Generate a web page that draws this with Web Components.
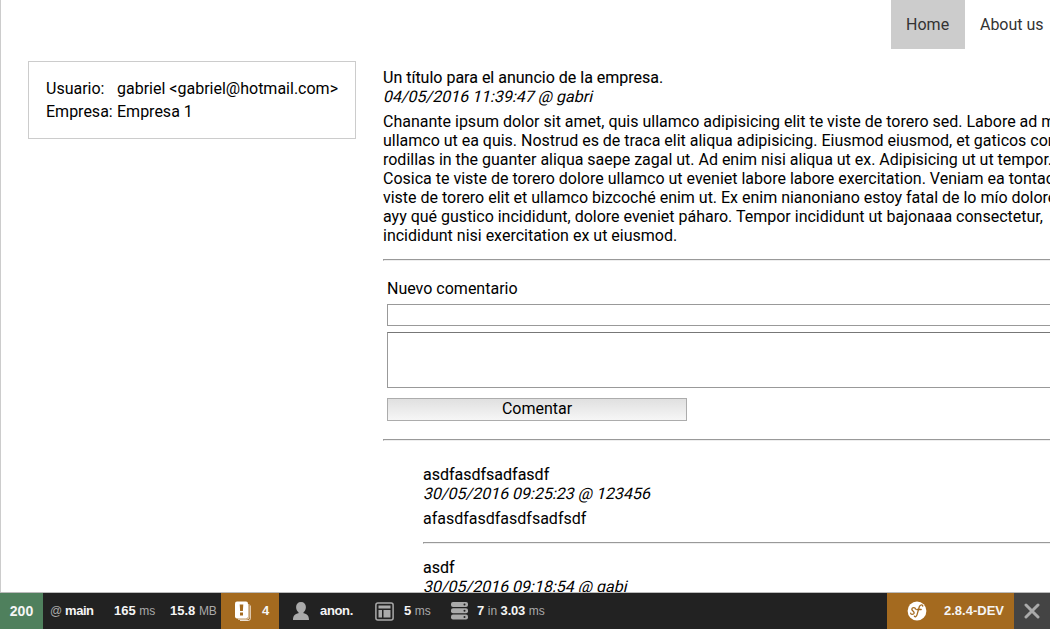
<!DOCTYPE html>
<html lang="es">
<head>
<meta charset="utf-8">
<title>Anuncio</title>
<style>
html,body{margin:0;height:100%;overflow:hidden;background:#fff}
body{font:16px/19px Roboto,sans-serif;color:#000}
</style>
</head>
<body>
<app-page>
  <site-nav slot="nav"><nav-link active>Home</nav-link><nav-link>About us</nav-link></site-nav>
  <user-card slot="side"></user-card>
  <news-post heading="Un título para el anuncio de la empresa." meta="04/05/2016 11:39:47 @ gabri">
    <text-line>Chanante ipsum dolor sit amet, quis ullamco adipisicing elit te viste de torero sed. Labore ad m</text-line>
    <text-line tight>ullamco ut ea quis. Nostrud es de traca elit aliqua adipisicing. Eiusmod eiusmod, et gaticos con</text-line>
    <text-line tight>rodillas in the guanter aliqua saepe zagal ut. Ad enim nisi aliqua ut ex. Adipisicing ut ut tempor.</text-line>
    <text-line>Cosica te viste de torero dolore ullamco ut eveniet labore labore exercitation. Veniam ea tontac</text-line>
    <text-line tight>viste de torero elit et ullamco bizcoché enim ut. Ex enim nianoniano estoy fatal de lo mío dolore</text-line>
    <text-line>ayy qué gustico incididunt, dolore eveniet páharo. Tempor incididunt ut bajonaaa consectetur,</text-line>
    <text-line>incididunt nisi exercitation ex ut eiusmod.</text-line>
  </news-post>
  <rule-line></rule-line>
  <comment-form></comment-form>
  <rule-line></rule-line>
  <comment-list>
    <news-post heading="asdfasdfsadfasdf" meta="30/05/2016 09:25:23 @ 123456"><text-line>afasdfasdfasdfsadfsdf</text-line></news-post>
    <rule-line></rule-line>
    <news-post heading="asdf" meta="30/05/2016 09:18:54 @ gabi"></news-post>
  </comment-list>
  <debug-toolbar slot="toolbar"></debug-toolbar>
</app-page>
<script>
const define = (name, html, setup) => customElements.define(name, class extends HTMLElement {
  connectedCallback() {
    if (this.shadowRoot) return;
    const root = this.attachShadow({mode: 'open'});
    root.innerHTML = html;
    if (setup) setup(this, root);
  }
});

define('app-page', `<style>
:host{display:flex;flex-direction:column;height:629px;width:1050px;overflow:hidden}
.page{flex:1;min-height:0;overflow:hidden;border-left:1px solid #ccc;display:flex;flex-direction:column}
.cols{flex:1;min-height:0;display:grid;grid-template-columns:328px minmax(0,1fr);column-gap:27px;padding:12px 0 0 27px}
main{padding-top:7px;min-width:0}
</style><div class="page"><slot name="nav"></slot><div class="cols"><aside><slot name="side"></slot></aside><main><slot></slot></main></div></div><slot name="toolbar"></slot>`);

define('site-nav', `<style>:host{display:flex;justify-content:flex-end;height:49px;margin-right:-8.600px;flex:none}</style><slot></slot>`);
define('nav-link', `<style>
:host{display:flex;align-items:center;padding:0 15px;color:#333;white-space:nowrap}
:host([active]){background:#ccc;padding-right:15.800px}
</style><slot></slot>`);

define('user-card', `<style>
:host{display:grid;grid-template-columns:71px auto;grid-auto-rows:23px;align-items:center;align-content:start;box-sizing:border-box;width:328px;height:78px;border:1px solid #ccc;padding:15px 17px;white-space:nowrap}
</style><span>Usuario:</span><span>gabriel &lt;gabriel@hotmail.com&gt;</span><span>Empresa:</span><span>Empresa 1</span>`);

define('news-post', `<style>
:host{display:block}
.t,.m{white-space:nowrap}
.t{-webkit-text-stroke:.1px #000}
.m{width:max-content;transform:skewX(-13deg);transform-origin:0 15px;margin-bottom:6px}
</style><div class="t"></div><div class="m"></div><slot></slot>`, (el, r) => {
  r.querySelector('.t').textContent = el.getAttribute('heading');
  r.querySelector('.m').textContent = el.getAttribute('meta');
});

define('text-line', `<style>:host{display:block;white-space:nowrap}:host([tight]){letter-spacing:-.012px}</style><slot></slot>`);
define('rule-line', `<style>:host{display:block;box-sizing:border-box;height:2px;border:1px solid;border-color:#999 #eee #eee #999;margin:14px -2px 14px 0}</style>`);

define('comment-form', `<style>
:host{display:flex;flex-direction:column;padding:4px 0 4px 4px}
label{margin-bottom:6px}
input,textarea{display:block;box-sizing:border-box;margin:0 -4px 0 0;border:1px solid #999;border-radius:0;background:#fff;outline:0;resize:none;padding:0}
input{height:22px;margin-bottom:6px}
textarea{height:56px;border-top-color:#777;margin-bottom:10px}
button{width:300px;height:23px;border:1px solid #acacac;border-radius:0;padding:0 0 2px;background:linear-gradient(#e0e0e0,#f6f6f6);font:16px/19px Roboto,sans-serif;color:#000}
</style><label>Nuevo comentario</label><input type="text"><textarea></textarea><button>Comentar</button>`);

define('comment-list', `<style>:host{display:block;padding:10px 0 0 40px}</style><slot></slot>`);

define('debug-toolbar', `<style>
:host{display:flex;height:36px;flex:none;border-top:1px solid #bbb;background:#222;color:#f5f5f5;font:bold 13px/36px "Liberation Sans",Arial,sans-serif;white-space:nowrap}
div{display:flex;align-items:center;box-sizing:border-box}
i{font-style:normal;font-weight:400;font-size:12px;letter-spacing:-.1px;color:#aaa}
b{letter-spacing:-.35px}
svg{display:block;flex:none}
.s{width:43px;justify-content:center;background:#4f805d;font-size:14px}
.o{background:#a46a1f}
.x{width:36px;justify-content:center;background:#444}
</style>
<div class="s">200</div>
<div style="width:71px;padding-left:7px;gap:3px"><i>@</i><b style="letter-spacing:-.5px">main</b></div>
<div style="width:56px"><span>165 <i>ms</i></span></div>
<div style="width:51px"><span>15.8 <i>MB</i></span></div>
<div class="o" style="width:58px;padding-left:14px;gap:11px">
<svg width="16" height="20" viewBox="0 0 16 20"><path d="M13.800 3v13.200a2 2 0 0 1-2 2H3M15.300 4.500v13a2 2 0 0 1-2 2H5" fill="none" stroke="#fff" stroke-width=".8"/><rect y=".5" width="13" height="17" rx="2" fill="#fff"/><path d="M4.700 3.500h3.600l-.4 6.500H5.100z" fill="#a46a1f"/><rect x="5" y="11.500" width="3" height="3" fill="#a46a1f"/></svg><span>4</span></div>
<div style="width:97px;padding-left:14px;gap:11px">
<svg width="16" height="18" viewBox="0 0 16 18"><path d="M8 0c3 0 4.900 2 4.900 5 0 2.200-.8 4-2.400 5.200v1.100c3.500.5 5.500 2.500 5.500 6.700H0c0-4.200 2-6.200 5.500-6.700v-1.100C3.900 9 3.100 7.200 3.100 5 3.100 2 5 0 8 0z" fill="#aaa"/></svg><b>anon.</b></div>
<div style="width:76px;margin-left:-1px;gap:10px">
<svg width="19" height="19" viewBox="0 0 19 19"><rect x=".9" y=".9" width="17.200" height="17.200" rx="2" fill="none" stroke="#aaa" stroke-width="1.500"/><path d="M3.500 3.500h12v3h-12zM3.500 8h3.500v7.500H3.500zM8.500 8h7v7.500h-7z" fill="#aaa"/></svg><span>5 <i>ms</i></span></div>
<div style="gap:9px">
<svg width="17" height="18" viewBox="0 0 17 18"><g fill="#aaa"><rect width="17" height="5" rx="2"/><rect y="6.300" width="17" height="5" rx="2"/><rect y="12.600" width="17" height="5" rx="2"/></g><g fill="#222"><circle cx="13.500" cy="2.500" r="1"/><circle cx="13.500" cy="8.800" r="1"/><circle cx="13.500" cy="15.100" r="1"/></g></svg><span>7 <i>in</i> <b style="letter-spacing:-.2px">3.03</b> <i>ms</i></span></div>
<div class="o" style="width:127px;margin-left:auto;padding-left:20px;gap:17px">
<svg width="20" height="20" viewBox="0 0 20 20"><circle cx="10" cy="10" r="9.400" fill="#fff"/><g fill="none" stroke="#a46a1f" stroke-linecap="round" stroke-linejoin="round"><path d="M8.400 8c.2-1.900-3.300-1.800-3.600 0-.3 1.700 3 2.300 2.300 4.300-.6 1.500-3.600 1.400-3.400-.1" stroke-width="1.300"/><path d="M15.700 5.200c.4-1.800-2.600-2-3.400.5l-2.300 8.200c-.5 1.800-2.100 2.500-2.600 1.300M9.700 8.500h4.500" stroke-width="1.300"/></g></svg><span>2.8.4-DEV</span></div>
<div class="x"><svg width="16" height="16" viewBox="0 0 16 16"><path d="M2 2l12 12M14 2L2 14" stroke="#aaa" stroke-width="3" stroke-linecap="round"/></svg></div>`);
</script>
</body>
</html>
